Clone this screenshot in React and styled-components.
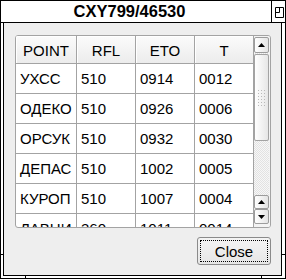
import styled, { createGlobalStyle } from 'styled-components';

const GlobalStyle = createGlobalStyle`
  html, body {
    margin: 0;
    padding: 0;
    background: #ffffff;
  }
  * {
    box-sizing: border-box;
  }
`

const rows = [
    ['УХСС', '510', '0914', '0012'],
    ['ОДЕКО', '510', '0926', '0006'],
    ['ОРСУК', '510', '0932', '0030'],
    ['ДЕПАС', '510', '1002', '0005'],
    ['КУРОП', '510', '1007', '0004'],
    ['ЛАВНИ', '360', '1011', '0014'],
];

const columns = ['POINT', 'RFL', 'ETO', 'T'];

const Window = styled.div`
  position: relative;
  width: 286px;
  height: 279px;
  border: 1px solid #000;
  background: #fff;
  display: flex;
  flex-direction: column;
  font-family: "Liberation Sans", Arial, sans-serif;
`

const TitleBar = styled.div`
  display: flex;
  height: 22px;
  border-bottom: 1px solid #000;
`

const Title = styled.div`
  flex: 1;
  text-align: center;
  padding-right: 13px;
  font-size: 16.5px;
  font-weight: bold;
  line-height: 21px;
  color: #000;
`

const MaxButton = styled.div`
  width: 14px;
  flex-shrink: 0;
  border-left: 1px solid #000;
  display: flex;
`

const Frame = styled.div`
  flex: 1;
  display: flex;
  padding: 0 3px 2px 2px;
`

const Dialog = styled.div`
  flex: 1;
  display: flex;
  flex-direction: column;
  border: 1px solid #000;
  border-top: none;
  background: #eeeeee;
  padding: 12px 10px 10px 11px;
`

const Tick = styled.div`
  position: absolute;
  background: #000;
  width: ${p => p.$vertical ? '1px' : '3px'};
  height: ${p => p.$vertical ? '3px' : '1px'};
`

const TableBox = styled.div`
  height: 193px;
  display: flex;
  border: 1px solid #a3a3a3;
  border-radius: 3px;
  background: #fff;
  overflow: hidden;
`

const Grid = styled.div`
  width: 238px;
  display: grid;
  grid-template-columns: 61px 59px 59px 59px;
  grid-auto-rows: 30px;
  grid-template-rows: 28px;
  align-content: start;
  overflow: hidden;
`

const HeadCell = styled.div`
  display: flex;
  align-items: center;
  justify-content: center;
  font-size: 15px;
  color: #000;
  background: linear-gradient(#fbfbfb, #ececec);
  border-right: 1px solid #a3a3a3;
  border-bottom: 1px solid #a3a3a3;
  box-shadow: inset 1px 1px 0 #ffffff;
  padding-top: 1px;
`

const Cell = styled.div`
  display: flex;
  align-items: center;
  padding-left: 4px;
  font-size: 15px;
  color: #000;
  white-space: nowrap;
  border-right: 1px solid #a3a3a3;
  border-bottom: 1px solid #a3a3a3;
`

const ScrollBar = styled.div`
  width: 16px;
  display: flex;
  flex-direction: column;
  padding: 1px 1px 3px 0;
  background: #f3f3f3;
`

const ArrowButton = styled.div`
  height: ${p => p.$h}px;
  flex-shrink: 0;
  display: flex;
  align-items: center;
  justify-content: center;
  border: 1px solid #9c9c9c;
  border-radius: 2px;
  background: linear-gradient(90deg, #ffffff, #e4e4e4);
`

const Track = styled.div`
  flex: 1;
  display: flex;
  flex-direction: column;
  padding-top: 1px;
  background: repeating-conic-gradient(#e2e2e2 0 25%, #f7f7f7 0 50%) 0 0 / 2px 2px;
`

const Thumb = styled.div`
  height: 87px;
  display: flex;
  align-items: center;
  justify-content: center;
  border: 1px solid #a3a3a3;
  border-radius: 2px;
  background: linear-gradient(90deg, #ffffff, #e6e6e6);
`

const Grip = styled.div`
  width: 9px;
  height: 18px;
  background: radial-gradient(circle, #b9b9b9 0.7px, transparent 0.8px) 0 0 / 3px 3px;
`

const Footer = styled.div`
  display: flex;
  justify-content: flex-end;
  margin-top: 9px;
`

const CloseButton = styled.button`
  width: 74px;
  height: 28px;
  padding: 2px;
  border: 1px solid #8a8a8a;
  border-radius: 3px;
  background: linear-gradient(#f4f4f4, #e6e6e6);
  font-family: "Liberation Sans", Arial, sans-serif;
  font-size: 15px;
  color: #000;
  display: flex;
`

const FocusRing = styled.span`
  flex: 1;
  display: flex;
  align-items: center;
  justify-content: center;
  border: 1px dotted #000;
`

const Arrow = ({down}) => (
    <svg width="7" height="4" viewBox="0 0 7 4">
        <polygon points={down ? '0,0 7,0 3.5,4' : '0,4 7,4 3.5,0'} fill="#000"/>
    </svg>
);

function App() {
    return (
        <>
            <GlobalStyle/>
            <Window>
                <TitleBar>
                    <Title>CXY799/46530</Title>
                    <MaxButton>
                        <svg width="13" height="21" viewBox="0 0 13 21">
                            <path d="M3.5 6.5H11.5V16.5H3.5Z M7.5 6.5V11.5H3.5" fill="none" stroke="#000"/>
                        </svg>
                    </MaxButton>
                </TitleBar>
                <Frame>
                    <Dialog>
                        <TableBox>
                            <Grid>
                                {columns.map(c => <HeadCell key={c}>{c}</HeadCell>)}
                                {rows.map((r, i) => r.map((v, j) =>
                                    <Cell key={i + '-' + j}>{v}</Cell>))}
                            </Grid>
                            <ScrollBar>
                                <ArrowButton $h={16}><Arrow/></ArrowButton>
                                <Track>
                                    <Thumb><Grip/></Thumb>
                                </Track>
                                <ArrowButton $h={14}><Arrow/></ArrowButton>
                                <ArrowButton $h={15}><Arrow down/></ArrowButton>
                            </ScrollBar>
                        </TableBox>
                        <Footer>
                            <CloseButton><FocusRing>Close</FocusRing></CloseButton>
                        </Footer>
                    </Dialog>
                </Frame>
                <Tick style={{left: 0, top: 253}}/>
                <Tick style={{right: 0, top: 253}}/>
                <Tick $vertical style={{left: 24, bottom: 0}}/>
                <Tick $vertical style={{right: 23, bottom: 0}}/>
            </Window>
        </>
    );
}

export default App;
